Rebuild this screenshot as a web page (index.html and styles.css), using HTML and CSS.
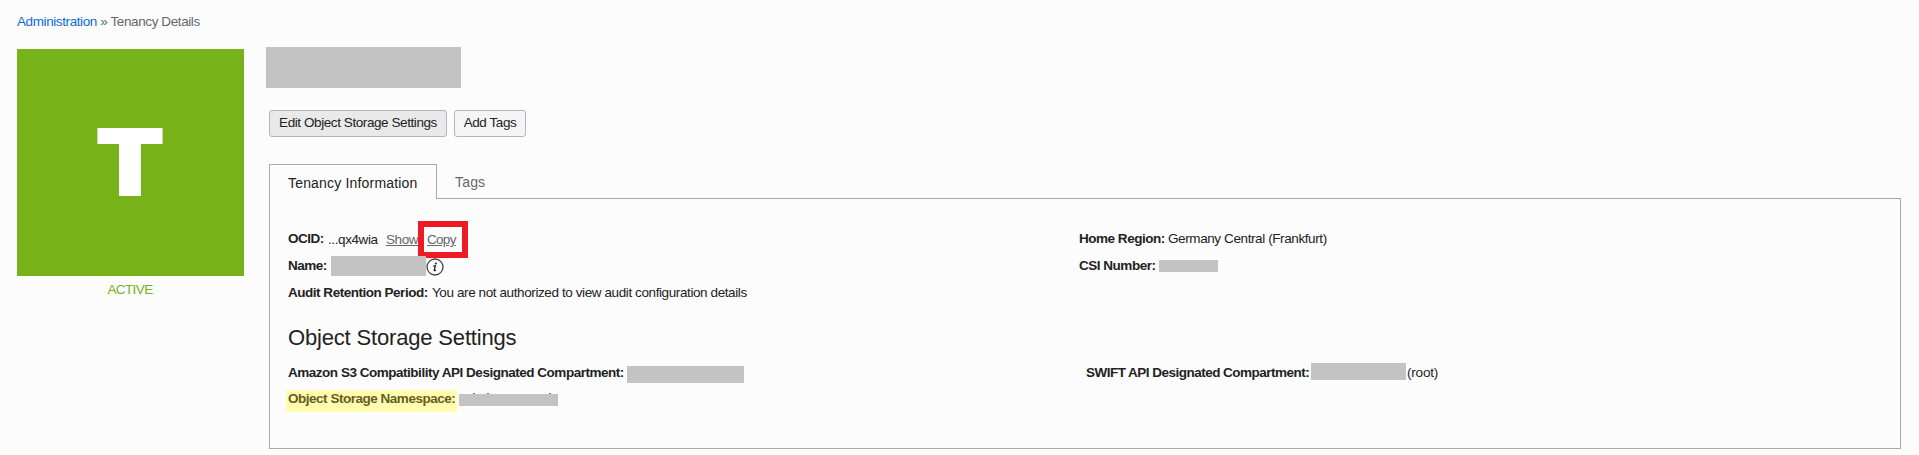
FILE: index.html
```html
<!DOCTYPE html>
<html lang="en">
<head>
<meta charset="utf-8">
<title>Tenancy Details</title>
<link rel="stylesheet" href="styles.css">
</head>
<body>
<nav class="breadcrumb"><a href="#">Administration</a> » <span>Tenancy Details</span></nav>
<main class="page">
  <aside class="summary">
    <div class="tile">
      <svg width="66" height="68" viewBox="0 0 66 68"><path d="M.4 0h65.2v16H44v52H22V16H.4z" fill="#fff"/></svg>
    </div>
    <div class="status">ACTIVE</div>
  </aside>
  <section class="details">
    <div class="redacted title"></div>
    <div class="actions">
      <button class="btn btn-active">Edit Object Storage Settings</button>
      <button class="btn btn-tags">Add Tags</button>
    </div>
    <div class="tabs">
      <div class="tab tab-current"><span>Tenancy Information</span></div>
      <div class="tab tab-other"><span>Tags</span></div>
    </div>
    <div class="panel">
      <div class="columns">
        <div class="col-left">
          <div class="row">
            <b class="ocid">OCID:</b><span class="ocid-value">...qx4wia</span><a class="show" href="#">Show</a><span class="copy-frame"><a href="#">Copy</a></span>
          </div>
          <div class="row">
            <b class="name">Name:</b><span class="redacted name-value"></span>
            <svg class="info" width="18" height="18" viewBox="0 0 18 18"><circle cx="9" cy="9" r="8" fill="none" stroke="#444" stroke-width="1.3"/><circle cx="9.8" cy="5.4" r="1" fill="#222"/><path d="M7.2 8.1l2.2-.4-1.1 4.4c-.1.8.6.7 1.6-.2" fill="none" stroke="#222" stroke-width="1.3"/></svg>
          </div>
          <div class="row"><b class="audit">Audit Retention Period:</b><span class="audit-value">You are not authorized to view audit configuration details</span></div>
        </div>
        <div class="col-right">
          <div class="row"><b class="region">Home Region:</b><span class="region-value">Germany Central (Frankfurt)</span></div>
          <div class="row"><b class="csi">CSI Number:</b><span class="redacted csi-value"></span></div>
        </div>
      </div>
      <h2>Object Storage Settings</h2>
      <div class="columns storage">
        <div class="col-left">
          <div class="row"><b class="amazon">Amazon S3 Compatibility API Designated Compartment:</b><span class="redacted amazon-value"></span></div>
          <div class="row"><span class="highlight"><b>Object Storage Namespace:</b></span><span class="redacted ns-value"><i></i><i></i><i></i></span></div>
        </div>
        <div class="col-right">
          <div class="row"><b class="swift">SWIFT API Designated Compartment:</b><span class="redacted swift-value"></span><span class="root">(root)</span></div>
        </div>
      </div>
    </div>
  </section>
</main>
</body>
</html>
```
FILE: styles.css
```css
* { box-sizing: border-box; }
body {
  margin: 0;
  padding: 14px 17px 0;
  height: 455px;
  overflow: hidden;
  background: #fcfcfc;
  color: #222;
  font: 13.5px/15px "Liberation Sans", Arial, sans-serif;
  letter-spacing: -.4px;
}
b { letter-spacing: -.48px; }
a { color: #66676a; }
.breadcrumb { color: #66676a; height: 33px; white-space: nowrap; }
.breadcrumb a { color: #0c6cd4; text-decoration: none; }
.page { display: flex; gap: 25px; }
.summary { width: 227px; padding-top: 2px; }
.tile {
  display: flex;
  height: 227px;
  padding: 79px 0 0 80px;
  background: #77b318;
}
.status { margin-top: 6px; text-align: center; color: #77b318; letter-spacing: -.6px; padding-right: 1px; }
.details { width: 1632px; }
.redacted { display: block; background: #c3c3c3; flex: none; }
.title { width: 195px; height: 41px; margin-left: -3px; }
.actions { display: flex; gap: 7px; margin-top: 22px; }
.btn {
  width: 178px;
  height: 27px;
  padding: 0 0 2px;
  border: 1px solid #b1b6c0;
  border-radius: 3px;
  background: #f5f5f5;
  color: #222;
  font: inherit;
  letter-spacing: -.42px;
  white-space: nowrap;
}
.btn-active { background: #e9e9e9; }
.btn-tags { width: 72px; }
.tabs { display: flex; margin-top: 27px; height: 34px; font-size: 14px; line-height: 16px; letter-spacing: .18px; }
.tab-current {
  width: 168px;
  height: 35px;
  padding: 10px 0 0 18px;
  border: 1px solid #ababab;
  border-bottom: 0;
  background: #fcfcfc;
  position: relative;
  z-index: 1;
}
.tab-other { padding: 10px 0 0 18px; color: #66676a; }
.panel { height: 251px; border: 1px solid #ababab; padding: 26px 18px 0; }
.columns { display: flex; }
.col-left { width: 791px; }
.row { display: flex; height: 27px; line-height: 27px; white-space: nowrap; }
.ocid { width: 40px; }
.ocid-value { width: 58px; padding-top: 1px; }
.show { width: 32px; padding-top: 1px; }
.copy-frame {
  width: 50px;
  height: 37px;
  margin-top: -4px;
  padding: 0 0 0 3px;
  border: 6px solid #ed1c24;
  line-height: 25px;
  background: #fcfcfc;
  letter-spacing: -.7px;
}
.name { width: 43px; }
.name-value { width: 95px; height: 20px; margin-top: 4px; }
.info { margin-top: 6px; }
.audit { width: 144px; }
.region { width: 89px; }
.csi { width: 80px; }
.csi-value { width: 59px; height: 12px; margin-top: 8px; }
h2 { margin: 19px 0 9px; font-size: 22px; line-height: 25px; font-weight: 400; letter-spacing: -.17px; }
.storage .row { height: 26px; }
.storage .col-left { width: 798px; }
.amazon { width: 339px; }
.amazon-value { width: 117px; height: 17px; margin-top: 7px; }
.highlight {
  width: 171px;
  height: 22px;
  margin: 5px 2px 0 -2px;
  padding-left: 2px;
  line-height: 17px;
  background: #fffbb0;
  color: #655e1c;
}
.ns-value { display: flex; width: 99px; height: 12px; margin-top: 9px; padding-left: 14px; }
.ns-value i { width: 2px; height: 1px; margin-top: -1px; margin-right: 12px; background: #777; }
.ns-value i + i { margin-right: 60px; }
.ns-value i + i + i { margin-right: 0; }
.swift { width: 225px; letter-spacing: -.52px; }
.swift-value { width: 95px; height: 17px; margin-top: 4px; }
.root { padding-left: 1px; letter-spacing: -.2px; }
```
